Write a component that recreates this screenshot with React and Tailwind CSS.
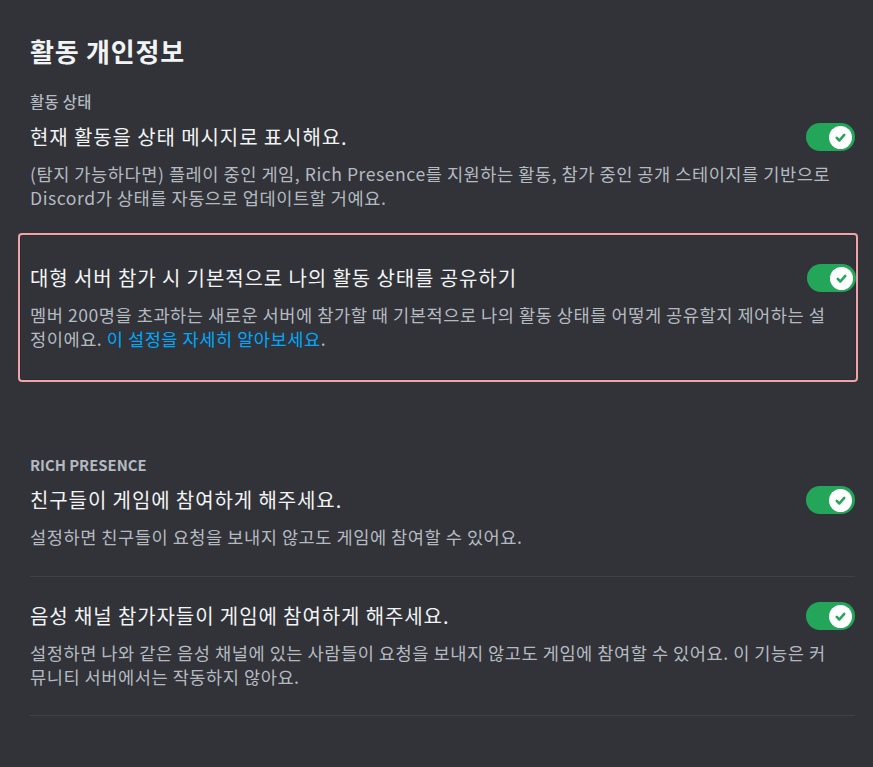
const FONT = { fontFamily: '"Noto Sans CJK KR", "Noto Sans", sans-serif' }

function Toggle() {
  return (
    <div className="w-[49px] h-[28px] rounded-full bg-[#23a55a] flex items-center justify-end pr-[3px] flex-shrink-0">
      <div className="w-[23px] h-[23px] rounded-full bg-white flex items-center justify-center">
        <svg width="15" height="15" viewBox="0 0 20 20" fill="none" stroke="#23a55a" strokeWidth="3.4" strokeLinecap="round" strokeLinejoin="round">
          <polyline points="5 10.5 8.5 14 15 6.5" />
        </svg>
      </div>
    </div>
  )
}

function SettingRow({ title, children, className = '' }) {
  return (
    <div className={className}>
      <div className="flex items-center justify-between gap-4">
        <div className="text-[20px] leading-[24px] tracking-[0.045em] text-[#f2f3f5]">{title}</div>
        <Toggle />
      </div>
      <div className="mt-[11px] text-[17.6px] leading-[24px] tracking-[0.03em] text-[#b5bac1] whitespace-nowrap">{children}</div>
    </div>
  )
}

export default function App() {
  return (
    <div className="min-h-screen bg-[#313338] pl-[30px] pr-[18px] pt-[36px] pb-10" style={FONT}>
      <h2 className="text-[26px] leading-[29px] tracking-[0.03em] font-bold text-[#f2f3f5]">활동 개인정보</h2>

      <div className="mt-[27px] text-[15.4px] leading-[19px] tracking-[0.02em] font-medium text-[#b5bac1]">활동 상태</div>
      <SettingRow title="현재 활동을 상태 메시지로 표시해요." className="mt-[12px]">
        (탐지 가능하다면) 플레이 중인 게임, Rich Presence를 지원하는 활동, 참가 중인 공개 스테이지를 기반으로
        <br />
        Discord가 상태를 자동으로 업데이트할 거예요.
      </SettingRow>

      {/* highlighted setting */}
      <div className="mt-[23px] ml-[-12px] mr-[-3px] pl-[10px] pr-0 pt-[29px] pb-[29px] border-2 border-[#f2a3a7] rounded-[4px] shadow-[inset_0_0_0_1px_#2b2d31]">
        <SettingRow title="대형 서버 참가 시 기본적으로 나의 활동 상태를 공유하기">
          멤버 200명을 초과하는 새로운 서버에 참가할 때 기본적으로 나의 활동 상태를 어떻게 공유할지 제어하는 설
          <br />
          정이에요. <span className="text-[#00a8fc]">이 설정을 자세히 알아보세요</span>.
        </SettingRow>
      </div>

      <div className="mt-[73px] text-[14.8px] leading-[19px] font-bold text-[#b5bac1]">RICH PRESENCE</div>
      <SettingRow title="친구들이 게임에 참여하게 해주세요." className="mt-[12px]">
        설정하면 친구들이 요청을 보내지 않고도 게임에 참여할 수 있어요.
      </SettingRow>
      <div className="mt-[27px] h-px bg-[#3f4147]" />

      <SettingRow title="음성 채널 참가자들이 게임에 참여하게 해주세요." className="mt-[25px]">
        설정하면 나와 같은 음성 채널에 있는 사람들이 요청을 보내지 않고도 게임에 참여할 수 있어요. 이 기능은 커
        <br />
        뮤니티 서버에서는 작동하지 않아요.
      </SettingRow>
      <div className="mt-[26px] h-px bg-[#3f4147]" />
    </div>
  )
}
